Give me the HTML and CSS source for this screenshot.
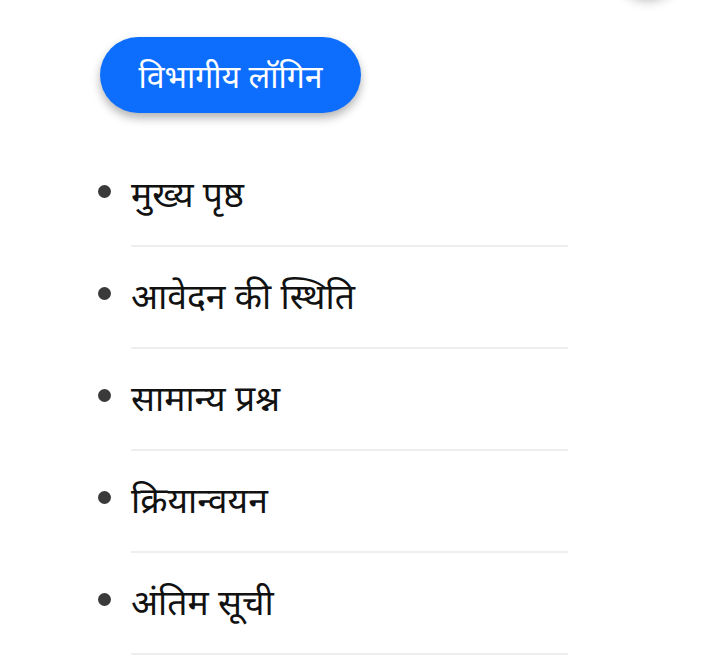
FILE: index.html
```html
<!DOCTYPE html>
<html lang="hi">
<head>
<meta charset="utf-8">
<link rel="stylesheet" href="styles.css">
</head>
<body>
<div class="fab"></div>
<div class="page">
  <a class="login-btn" href="#">विभागीय लॉगिन</a>
  <ul class="menu">
    <li class="menu-item">मुख्य पृष्ठ</li>
    <li class="menu-item">आवेदन की स्थिति</li>
    <li class="menu-item">सामान्य प्रश्न</li>
    <li class="menu-item">क्रियान्वयन</li>
    <li class="menu-item">अंतिम सूची</li>
  </ul>
</div>
</body>
</html>
```
FILE: styles.css
```css
html, body {
  margin: 0;
  padding: 0;
  background: #fff;
}
body {
  font-family: "Noto Sans", sans-serif;
  color: #111;
  overflow: hidden;
  height: 659px;
  position: relative;
}
.fab {
  position: absolute;
  top: -72px;
  left: 614px;
  width: 68px;
  height: 68px;
  border-radius: 50%;
  background: #fff;
  box-shadow: 0 4px 12px rgba(0,0,0,0.3);
}
.page {
  padding: 37px 0 0 100px;
}
.login-btn {
  display: inline-flex;
  align-items: center;
  justify-content: center;
  width: 261px;
  height: 76px;
  border-radius: 38px;
  background: #0d6efd;
  color: #fff;
  font-size: 32px;
  text-decoration: none;
  box-shadow: 0 5px 10px rgba(0,0,0,0.3);
}
.menu {
  margin: 32px 0 0 31px;
  padding: 0;
  width: 437px;
  list-style: none;
}
.menu-item {
  display: flex;
  align-items: center;
  font-size: 35.5px;
  line-height: 40px;
  padding: 28px 0 32px;
  border-bottom: 2px solid #eeeeee;
}
.menu-item::before {
  content: "";
  flex: none;
  width: 13px;
  height: 13px;
  border-radius: 50%;
  background: #3a3a3a;
  margin-left: -33px;
  margin-right: 20px;
  margin-top: -4px;
}
```
